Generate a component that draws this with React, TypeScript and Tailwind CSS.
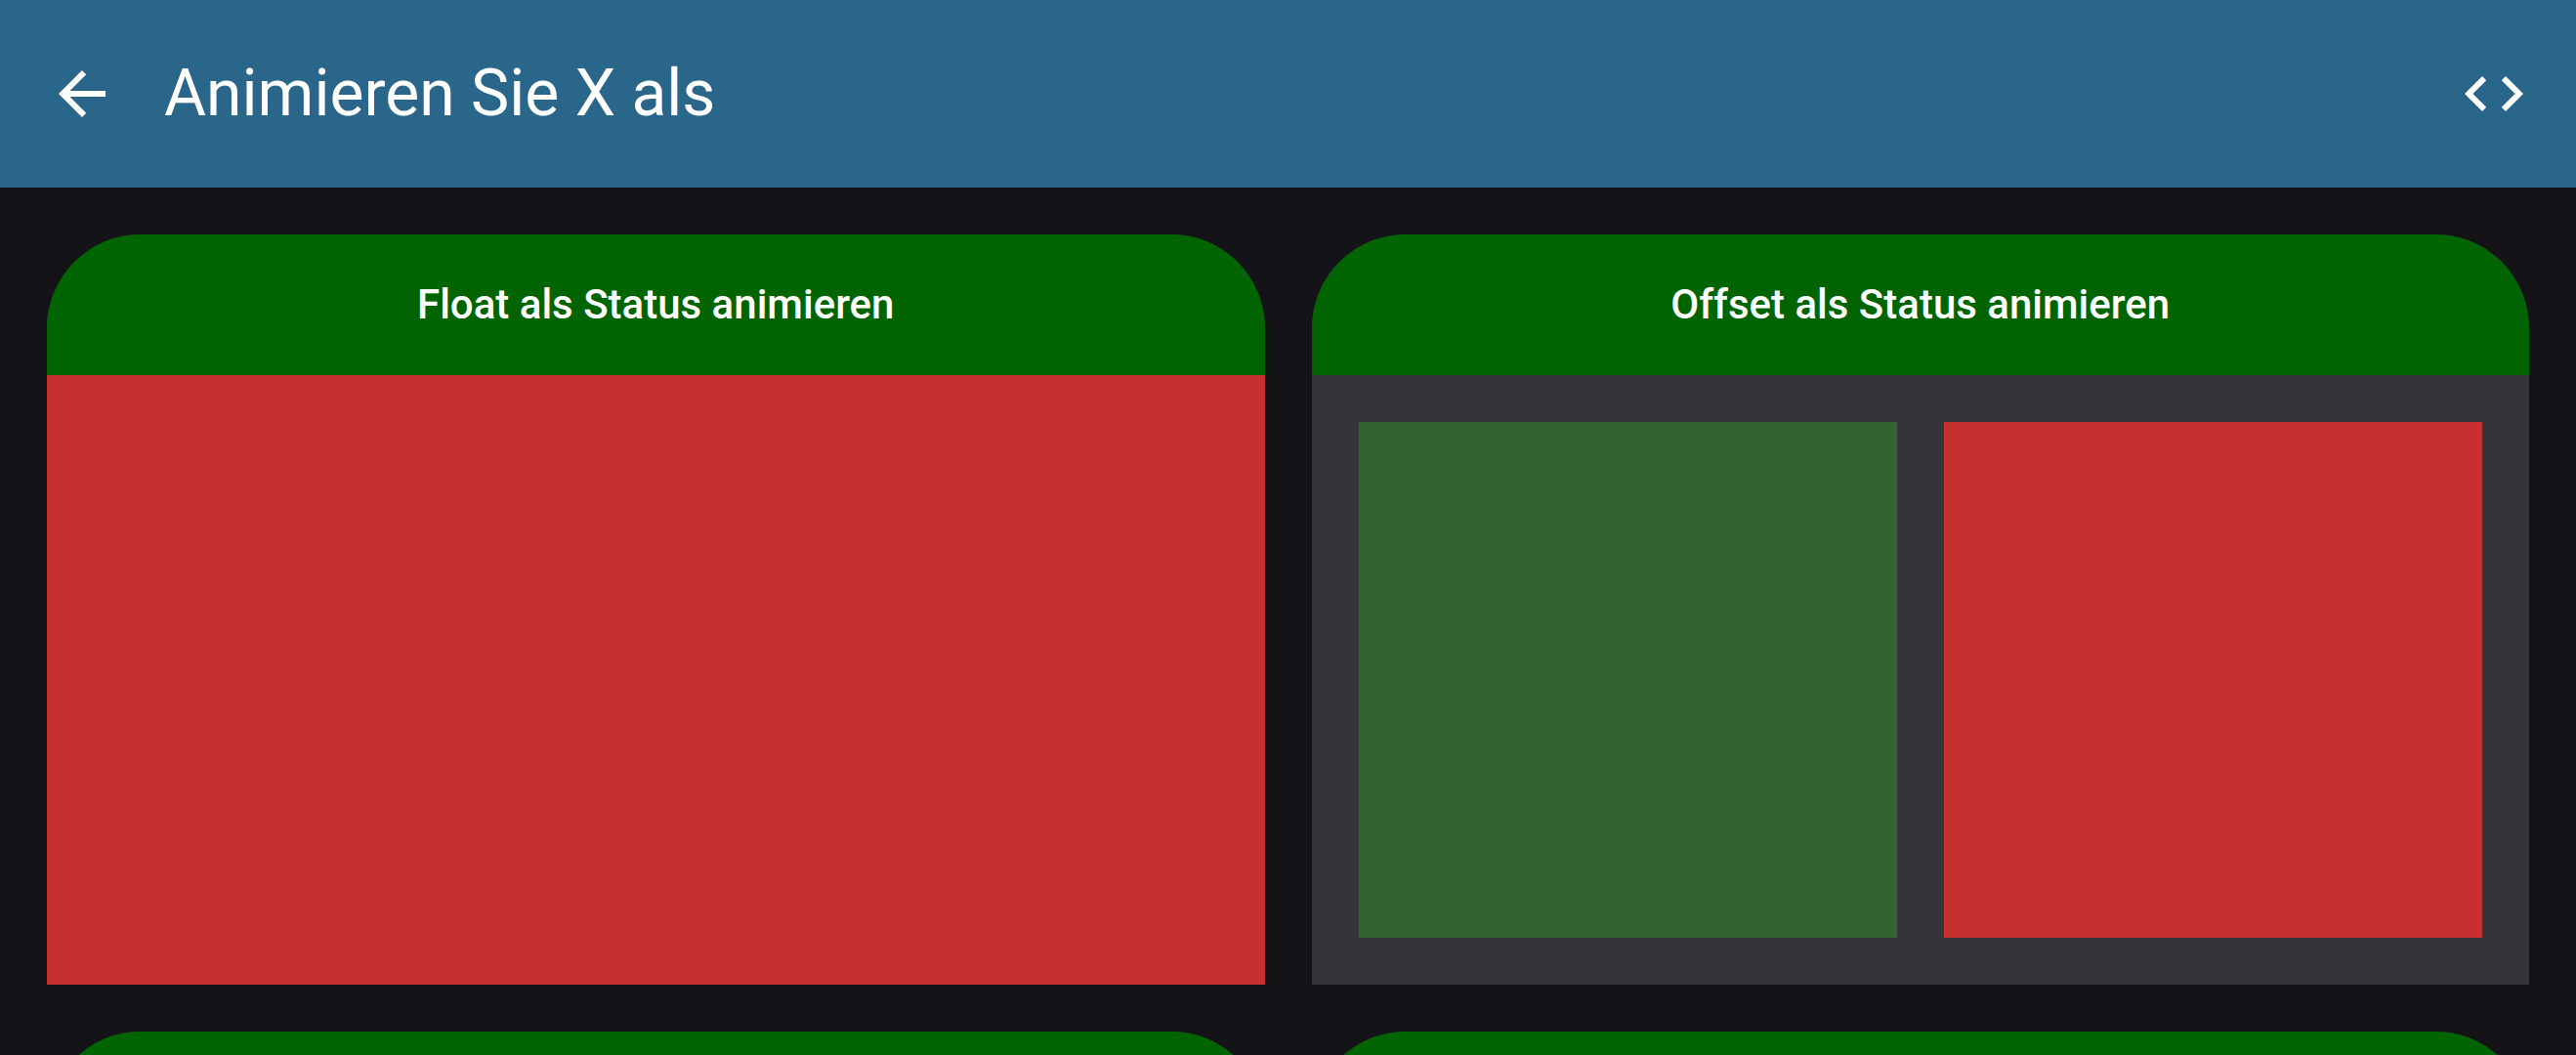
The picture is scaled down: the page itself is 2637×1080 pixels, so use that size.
import type { ReactNode } from "react";

function BackIcon() {
  return (
    <svg viewBox="0 0 24 24" className="size-18 fill-current" aria-hidden="true">
      <path d="M20 11H7.83l5.59-5.59L12 4l-8 8 8 8 1.41-1.41L7.83 13H20v-2z" />
    </svg>
  );
}

function CodeIcon() {
  return (
    <svg viewBox="0 0 24 24" className="size-18 fill-current" aria-hidden="true">
      <path d="M9.4 16.6L4.8 12l4.6-4.6L8 6l-6 6 6 6 1.4-1.4zm5.2 0l4.6-4.6-4.6-4.6L16 6l6 6-6 6-1.4-1.4z" />
    </svg>
  );
}

function Card({ title, children }: { title?: string; children?: ReactNode }) {
  return (
    <section className="flex flex-col overflow-hidden rounded-t-[96px] bg-[#36343b]">
      <div className="flex h-36 items-center justify-center bg-[#006400]">
        {title && (
          <h2 className="text-[42px] leading-[60px] font-medium text-white">{title}</h2>
        )}
      </div>
      <div className="flex h-156">{children}</div>
    </section>
  );
}

export default function App() {
  return (
    <div className="flex h-screen flex-col overflow-hidden bg-[#141318] font-['Roboto',sans-serif]">
      <header className="flex h-48 shrink-0 items-center bg-[#296689] px-12 text-white">
        <button type="button" aria-label="Zurück">
          <BackIcon />
        </button>
        <h1 className="ml-12 flex-1 text-[66px] leading-[84px] font-normal">Animieren Sie X als</h1>
        <button type="button" aria-label="Quellcode">
          <CodeIcon />
        </button>
      </header>
      <main className="grid min-h-0 flex-1 auto-rows-max grid-cols-2 gap-12 overflow-hidden p-12">
        <Card title="Float als Status animieren">
          <div className="flex-1 bg-[#c8302f]" />
        </Card>
        <Card title="Offset als Status animieren">
          <div className="flex flex-1 gap-12 p-12">
            <div className="flex-1 bg-[#31642f]" />
            <div className="flex-1 bg-[#c8302f]" />
          </div>
        </Card>
        <Card />
        <Card />
      </main>
    </div>
  );
}
